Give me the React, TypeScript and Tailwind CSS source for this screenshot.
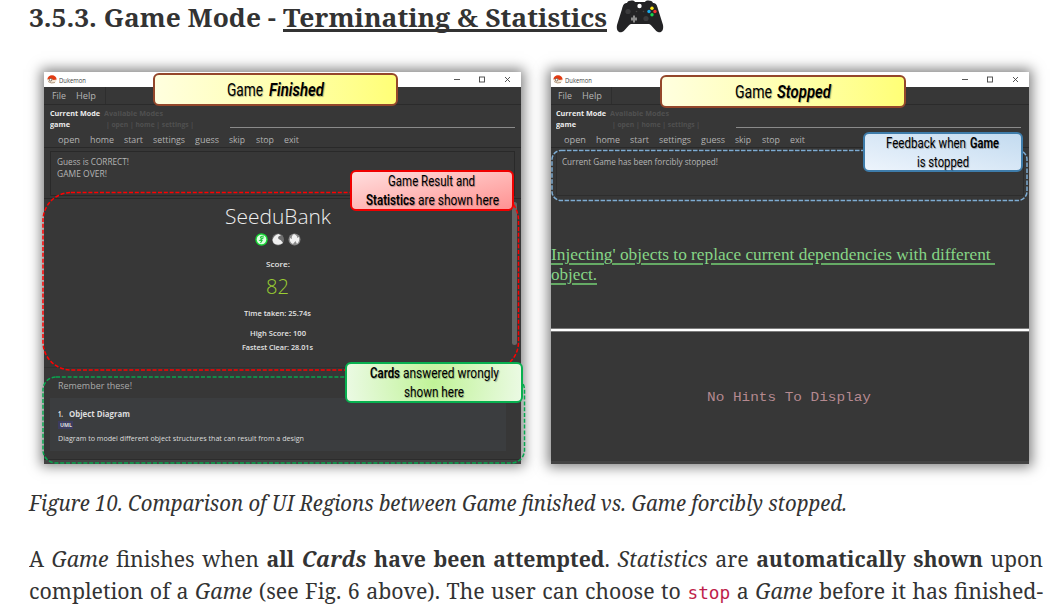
import { useLayoutEffect, useRef, type ReactNode } from "react";

const serif = "font-['Noto_Serif','DejaVu_Serif_Condensed','DejaVu_Serif',serif]";

/** One line of text stretched horizontally to the width of its box. */
function Fit({ className = "", children }: { className?: string; children: ReactNode }) {
  const outer = useRef<HTMLSpanElement>(null);
  const inner = useRef<HTMLSpanElement>(null);
  useLayoutEffect(() => {
    const o = outer.current;
    const i = inner.current;
    if (!o || !i) return;
    i.style.transform = "none";
    const scale = o.getBoundingClientRect().width / i.getBoundingClientRect().width;
    i.style.transform = `scaleX(${scale})`;
  }, []);
  return (
    <span ref={outer} className={`block shrink-0 whitespace-nowrap ${className}`}>
      <span ref={inner} className="inline-block origin-left align-top">{children}</span>
    </span>
  );
}

function Controller() {
  return (
    <svg className="ml-[8.5px] h-[33px] w-[48px] shrink-0" viewBox="0 0 48 33">
      <path d="M11 3C12 0 18 0 19 2H29C30 0 36 0 37 3C40 3 41 5 42 9L47 25C48 31 45 33 42 32C39 31 36 25 33 24H15C12 25 9 31 6 32C3 33 0 31 1 25L6 9C7 5 8 3 11 3Z" fill="#232325" />
      <circle cx="23.5" cy="6" r="2.2" fill="#fff" />
      <circle cx="12" cy="11.5" r="2.6" fill="#3b3b3d" />
      <circle cx="30" cy="18.5" r="2.6" fill="#3b3b3d" />
      <path d="M17 15.5h2v2h2v3h-2v2h-2v-2h-2v-3h2z" fill="#8a8a8a" />
      <circle cx="20.5" cy="11.5" r=".8" fill="#444" />
      <circle cx="27.5" cy="11.5" r=".8" fill="#444" />
      <circle cx="36" cy="8.3" r="1.7" fill="#ffe818" />
      <circle cx="33" cy="11.5" r="1.7" fill="#17a8ea" />
      <circle cx="39" cy="11.5" r="1.7" fill="#f03030" />
      <circle cx="36" cy="14.7" r="1.7" fill="#16d64c" />
    </svg>
  );
}

function TitleBar() {
  return (
    <div className="flex h-[15px] items-center bg-white text-[7.5px] leading-[12px] text-[#444]">
      <svg className="ml-[3px] h-[9px] w-[10px]" viewBox="0 0 10 9">
        <ellipse cx="5" cy="4.5" rx="4.6" ry="4" fill="#f4e6d4" />
        <path d="M.4 4.5C.4 2 2.5.3 5 .3S9.600 2 9.600 4.500L6.500 5 4 3.500Z" fill="#e23a12" />
        <circle cx="3.600" cy="4.700" r="1.300" fill="#fff" stroke="#4a3b2d" strokeWidth=".7" />
        <path d="M1 6.500Q4 8.800 8 7.500" fill="none" stroke="#8a6b50" strokeWidth=".6" />
      </svg>
      <Fit className="ml-[2px] w-[27px]">Dukemon</Fit>
      <svg className="ml-auto mr-[9px] h-[9px] w-[60px]" viewBox="0 0 60 9" fill="none" stroke="#444" strokeWidth=".9">
        <path d="M2 4.500h6M53 2l5 5M58 2l-5 5" />
        <rect x="27.500" y="2" width="5" height="5" />
      </svg>
    </div>
  );
}

function Header() {
  return (
    <>
      <TitleBar />
      <div className="flex h-[18px] border-b border-[#2b2b2b] text-[9.5px] leading-[18px] text-[#b4b4b4]">
        <Fit className="ml-[8px] w-[14px]">File</Fit>
        <Fit className="ml-[10px] w-[20px]">Help</Fit>
        <div className="ml-[9px] w-px bg-[#2e2e2e]" />
      </div>
      <div className="flex h-[26px] pt-[3px] text-[7.5px] font-bold leading-[11px]">
        <div className="ml-[6px] w-[50px] text-[#ececec]">
          <Fit className="w-[50px]">Current Mode</Fit>
          <Fit className="w-[20px]">game</Fit>
        </div>
        <div className="ml-[4px] w-[92px] text-[#505050]">
          <Fit className="w-[59px]">Available Modes</Fit>
          <Fit className="ml-[2px] w-[88px]">| open | home | settings |</Fit>
        </div>
        <div className="ml-[34px] mt-[19px] h-px w-[285px] bg-[#8a8a8a]" />
      </div>
      <div className="flex h-[17px] border-b border-[#292929] text-[9.500px] leading-[17px] text-[#b2b2b2]">
        <Fit className="ml-[14px] w-[22px]">open</Fit>
        <Fit className="ml-[10px] w-[24px]">home</Fit>
        <Fit className="ml-[10px] w-[19px]">start</Fit>
        <Fit className="ml-[10px] w-[32px]">settings</Fit>
        <Fit className="ml-[10px] w-[24px]">guess</Fit>
        <Fit className="ml-[10px] w-[16px]">skip</Fit>
        <Fit className="ml-[11px] w-[18px]">stop</Fit>
        <Fit className="ml-[10px] w-[15px]">exit</Fit>
      </div>
    </>
  );
}

const callout = "absolute flex flex-col items-center rounded-[6px] border-2 font-[Roboto,sans-serif] text-black [text-shadow:1px_1px_1px_rgba(0,0,0,0.3)]";
const windowBase = "relative shrink-0 bg-[#373737] font-['Open_Sans','Noto_Sans',sans-serif] shadow-[0_0_12px_3px_rgba(0,0,0,0.5)]";

function FinishedWindow() {
  return (
    <div className={`${windowBase} ml-[44px] h-[391px] w-[477px]`}>
      <Header />
      <div className="mx-[6px] mt-[3px] h-[45px] border border-[#292929] pl-[6px] pt-[4px] text-[8.500px] leading-[12px] text-[#b5b5b5]">
        <Fit className="w-[72px]">Guess is CORRECT!</Fit>
        <Fit className="w-[50px]">GAME OVER!</Fit>
      </div>
      <div className="mt-[2px] flex h-[169px] flex-col items-center border-t border-[#292929] pr-[10px] text-[7.500px] font-semibold leading-[12px] text-[#e4e4e4]">
        <Fit className="mt-[3px] w-[106px] text-[21px] font-light leading-[28px] text-[#eeeeee]">SeeduBank</Fit>
        <svg className="mt-[3px] h-[13px] w-[46px]" viewBox="0 0 46 13">
          <circle cx="6.500" cy="6.500" r="6.200" fill="#19d536" />
          <circle cx="6.500" cy="6.500" r="4.800" fill="#dcffe0" />
          <path d="M9 3Q5 3 5.500 5H8L5 7.500H7L5.500 10" fill="none" stroke="#20c83d" strokeWidth="1.100" />
          <circle cx="23" cy="6.500" r="6" fill="#6e6e6e" />
          <path d="M17.500 7Q19 2 23.500 1L26 2.500Q22 3 23.500 6Q26 6.500 28 10Q24 13 20 11Q18 10 17.500 7" fill="#f0f0f0" />
          <circle cx="39.500" cy="6.500" r="6" fill="#8a8a8a" />
          <path d="M39 1Q43 3 42 5L44 4Q45 8 42 11L40.500 8 38 11Q34 9 35 5L37 6Q36 3 39 1" fill="#f2f2f2" />
        </svg>
        <Fit className="mt-[12px] w-[24px]">Score:</Fit>
        <Fit className="mt-[4px] w-[23px] text-[20px] font-light leading-[26px] text-[#9acd32]">82</Fit>
        <Fit className="mt-[7px] w-[67px]">Time taken: 25.74s</Fit>
        <Fit className="mt-[8px] w-[56px]">High Score: 100</Fit>
        <Fit className="mt-[2px] w-[71px]">Fastest Clear: 28.01s</Fit>
      </div>
      <div className="border-t border-[#303030] pt-[11px]">
        <Fit className="ml-[14px] w-[74px] text-[9px] leading-[14px] text-[#aaa]">Remember these!</Fit>
        <div className="ml-[6px] mt-[5px] h-[53px] w-[456px] bg-[#3b3d3f] pl-[8px] pt-[9px] text-[#dedede]">
          <div className="flex text-[8px] font-bold leading-[13px]">
            <Fit className="w-[5px]">1.</Fit>
            <Fit className="ml-[6px] w-[61px]">Object Diagram</Fit>
          </div>
          <div className="mt-px flex h-[8px] w-[15px] justify-center bg-[#3c3c60] text-[5.500px] font-bold leading-[8px]">
            <Fit className="w-[12px]">UML</Fit>
          </div>
          <Fit className="mt-[3px] w-[246px] text-[7.500px] leading-[12px]">Diagram to model different object structures that can result from a design</Fit>
        </div>
      </div>
      <div className="mt-[8px] h-[5px] border-t border-[#2c2c2c] bg-[#434343]" />

      <div className="absolute left-[468px] top-[130px] h-[143px] w-[5px] rounded-sm bg-[#666]" />
      <svg className="absolute -left-[4px] top-[116px] h-[280px] w-[490px]" viewBox="0 0 490 280" fill="none" strokeWidth="1.500" strokeDasharray="4 1.800">
        <rect x="3" y="4.500" width="475.500" height="177.500" rx="28" stroke="#f00" />
        <rect x="3" y="189" width="481.500" height="86" rx="13" stroke="#08a64f" />
      </svg>
      <div className={`${callout} left-[109px] top-[1px] h-[33px] w-[245px] border-[#94472b] bg-linear-to-r from-[#ffffdf] to-[#ffff76]`}>
        <div className="flex text-[18px] leading-[30px]">
          <Fit className="w-[36px]">Game</Fit>
          <Fit className="ml-[6px] w-[55px] font-semibold italic">Finished</Fit>
        </div>
      </div>
      <div className={`${callout} left-[305.500px] top-[98px] h-[41px] w-[164px] border-[#f00000] bg-linear-to-br from-[#ffdede] to-[#ff9292] text-[15px] leading-[19px]`}>
        <Fit className="w-[87px]">Game Result and</Fit>
        <div className="flex pl-[2px]">
          <Fit className="w-[49px] font-semibold">Statistics</Fit>
          <Fit className="ml-[3px] w-[81px]">are shown here</Fit>
        </div>
      </div>
      <div className={`${callout} left-[301px] top-[290px] h-[41px] w-[178px] border-[#08b050] bg-[radial-gradient(circle,#c0f397,#ebfae4)] text-[15px] leading-[19px]`}>
        <div className="flex">
          <Fit className="w-[30px] font-semibold">Cards</Fit>
          <Fit className="ml-[3px] w-[96px]">answered wrongly</Fit>
        </div>
        <Fit className="w-[60px]">shown here</Fit>
      </div>
    </div>
  );
}

function StoppedWindow() {
  return (
    <div className={`${windowBase} ml-[30px] h-[392px] w-[478px]`}>
      <div className="overflow-hidden">
        <div className="-ml-px">
          <Header />
        </div>
      </div>
      <div className="mx-[5px] mt-[3px] h-[45px] border border-[#2d2d2d] pl-[5px] pt-[4px] text-[8.500px] leading-[12px] text-[#b5b5b5]">
        <Fit className="w-[156px]">Current Game has been forcibly stopped!</Fit>
      </div>
      <div className="h-[132px] pt-[49px] font-['Liberation_Serif',serif] text-[17px] leading-[20px] text-[#86d586]">
        <Fit className="w-[444px]"><u className="decoration-[#65aa65] decoration-[1.500px] underline-offset-[3px]">Injecting' objects to replace current dependencies with different&nbsp;</u></Fit>
        <Fit className="w-[46px]"><u className="decoration-[#65aa65] decoration-[1.500px] underline-offset-[3px]">object.</u></Fit>
      </div>
      <div className="h-[4px] border-y border-[#7b7b7b] bg-white" />
      <div className="flex h-[129px] justify-center pt-[57px] pr-[2px] font-['Liberation_Mono',monospace] text-[13px] leading-[18px] text-[#b58990]">
        <Fit className="w-[164px]">No Hints To Display</Fit>
      </div>
      <div className="h-[3px] bg-[#434343]" />

      <svg className="absolute -left-px top-[76px] h-[56px] w-[480px]" viewBox="0 0 480 56" fill="none">
        <rect x="2" y="2.500" width="475" height="50" rx="9" stroke="#7eacd2" strokeWidth="1.500" strokeDasharray="4.500 1.500" />
      </svg>
      <div className={`${callout} left-[109px] top-[3px] h-[33px] w-[246px] border-[#94472b] bg-linear-to-r from-[#ffffdf] to-[#ffff76]`}>
        <div className="flex text-[18px] leading-[30px]">
          <Fit className="w-[37px]">Game</Fit>
          <Fit className="ml-[5px] w-[54px] font-semibold italic">Stopped</Fit>
        </div>
      </div>
      <div className={`${callout} left-[312px] top-[59.500px] h-[40px] w-[160px] border-[#3e7caa] bg-linear-to-tr from-[#edf4fc] to-[#c3dbf0] text-[15px] leading-[19px]`}>
        <div className="flex pr-[2px]">
          <Fit className="w-[80px]">Feedback when</Fit>
          <Fit className="ml-[4px] w-[29px] font-semibold">Game</Fit>
        </div>
        <Fit className="w-[52px]">is stopped</Fit>
      </div>
    </div>
  );
}

export default function App() {
  return (
    <main className={`flex h-[605px] w-[1059px] flex-col overflow-hidden bg-white text-[#333] ${serif}`}>
      <h3 className="flex h-[72px] shrink-0 pl-[29px] text-[26px] font-bold leading-[34px]">
        <Fit className="w-[247px]">3.5.3. Game Mode -</Fit>
        <div className="ml-[7px] h-[32px] w-[324px] border-b-[3px] border-[#333]">
          <Fit className="w-[324px]">Terminating &amp; Statistics</Fit>
        </div>
        <Controller />
      </h3>
      <div className="flex h-[392px] shrink-0">
        <FinishedWindow />
        <StoppedWindow />
      </div>
      <Fit className="ml-[29px] mt-[23px] w-[818px] text-[21px] italic leading-[32px]">Figure 10. Comparison of UI Regions between Game finished vs. Game forcibly stopped.</Fit>
      <p className="ml-[29px] mt-[24px] w-[1014px] shrink-0 text-[21px] leading-[32px]">
        <Fit className="w-[1014px] [word-spacing:2px]">
          A <em>Game</em> finishes when <strong>all <em>Cards</em> have been attempted</strong>. <em>Statistics</em> are <strong>automatically shown</strong> upon
        </Fit>
        <Fit className="w-[1014px] [word-spacing:1px]">
          completion of a <em>Game</em> (see Fig. 6 above). The user can choose to <code className="font-['DejaVu_Sans_Mono',monospace] text-[17.500px] text-[#be1e4b]">stop</code> a <em>Game</em> before it has finished-
        </Fit>
      </p>
    </main>
  );
}
